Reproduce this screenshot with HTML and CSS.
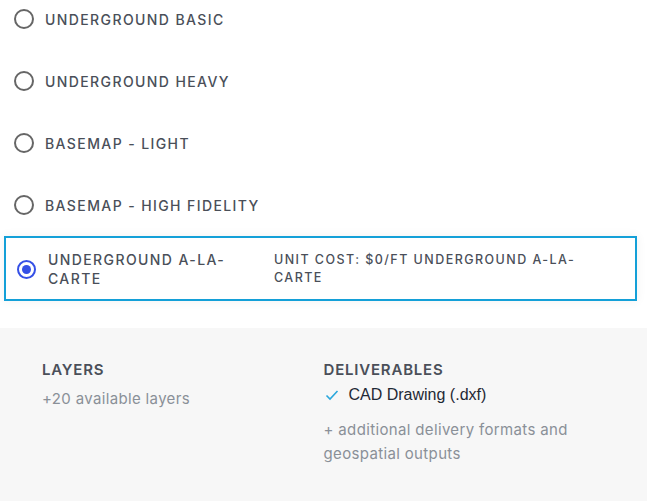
FILE: index.html
```html
<!DOCTYPE html>
<html lang="en">
<head>
    <meta charset="UTF-8">
    <meta name="viewport" content="width=device-width, initial-scale=1.0">
    <title>Map Package Options</title>
    <link rel="stylesheet" href="styles.css">
</head>
<body>

    <div class="options">
        <label class="option">
            <span class="radio"></span>
            <span class="option-name">Underground Basic</span>
        </label>
        <label class="option">
            <span class="radio"></span>
            <span class="option-name">Underground Heavy</span>
        </label>
        <label class="option">
            <span class="radio"></span>
            <span class="option-name">Basemap - Light</span>
        </label>
        <label class="option">
            <span class="radio"></span>
            <span class="option-name">Basemap - High Fidelity</span>
        </label>

        <label class="option selected">
            <span class="radio checked"></span>
            <span class="option-name">Underground A-la-carte</span>
            <span class="option-cost">Unit cost: $0/ft Underground A-la-carte</span>
        </label>
    </div>

    <div class="details">
        <div class="detail-col">
            <h4>Layers</h4>
            <p class="muted">+20 available layers</p>
        </div>
        <div class="detail-col">
            <h4>Deliverables</h4>
            <ul class="deliverables">
                <li>
                    <svg width="14" height="12" viewBox="0 0 14 12"><path d="M1.5 6.5 L5 10 L12.5 2" fill="none" stroke="#2aa7dc" stroke-width="1.6"/></svg>
                    CAD Drawing (.dxf)
                </li>
            </ul>
            <p class="muted">+ additional delivery formats and geospatial outputs</p>
        </div>
    </div>

</body>
</html>
```

FILE: styles.css
```css
body {
    margin: 0;
    padding: 0;
    width: 647px;
    font-family: Inter, "Noto Sans", sans-serif;
    background: #fff;
}
.options {
    display: flex;
    flex-direction: column;
    gap: 24px;
    padding-bottom: 27px;
}
.option {
    display: flex;
    align-items: center;
    height: 38px;
    padding-left: 14px;
    cursor: pointer;
}
.radio {
    width: 16px;
    height: 16px;
    border: 2px solid #666;
    border-radius: 50%;
    margin-right: 11px;
    flex-shrink: 0;
}
.radio.checked {
    width: 15px;
    height: 15px;
    border: 2px solid #3550e6;
    position: relative;
}
.radio.checked::after {
    content: "";
    position: absolute;
    left: 3px;
    top: 3px;
    width: 9px;
    height: 9px;
    border-radius: 50%;
    background: #3550e6;
}
.option-name {
    font-size: 14px;
    font-weight: 500;
    letter-spacing: 1.4px;
    text-transform: uppercase;
    color: #4a4f59;
}
.option.selected {
    height: auto;
    margin: -12px 10px 0 4px;
    padding: 12px 30px 11px 11px;
    border: 2px solid #14a0d8;
    box-shadow: 0 0 10px rgba(0, 0, 0, 0.06);
    align-items: center;
}
.option.selected .radio {
    margin-right: 12px;
}
.option.selected .option-name {
    width: 204px;
    margin-right: 22px;
    line-height: 19px;
}
.option-cost {
    flex: 1;
    font-size: 12.5px;
    font-weight: 500;
    letter-spacing: 1.45px;
    line-height: 18px;
    text-transform: uppercase;
    color: #4a4f59;
}
.details {
    display: grid;
    grid-template-columns: 1fr 1fr;
    background: #f7f7f7;
    padding: 32px 42px 36px;
}
.details h4 {
    margin: 0 0 8px;
    font-size: 15px;
    font-weight: 600;
    letter-spacing: 0.8px;
    text-transform: uppercase;
    color: #4a4f59;
}
.muted {
    margin: 0;
    font-size: 15px;
    line-height: 24px;
    letter-spacing: 0.35px;
    color: #8a9098;
}
.deliverables {
    list-style: none;
    margin: -1px 0 14px;
    padding: 0;
}
.deliverables li {
    display: flex;
    align-items: center;
    gap: 10px;
    font-family: "Liberation Sans", Arial, sans-serif;
    font-size: 16px;
    color: #1f2935;
    padding-left: 1px;
}
```
